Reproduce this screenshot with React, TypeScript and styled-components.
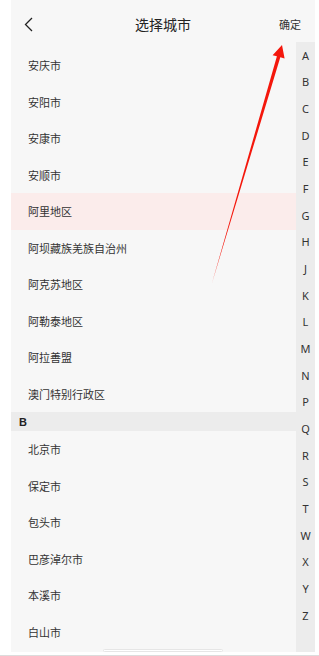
import React from "react";
import styled, { createGlobalStyle } from "styled-components";

const Global = createGlobalStyle`
  html, body { margin: 0; padding: 0; background: #ffffff; }
  body { font-family: "Noto Sans", "Noto Sans CJK SC", sans-serif; }
  * { box-sizing: border-box; }
`;

const Screen = styled.div`
  position: relative;
  width: 319px;
  height: 656px;
  overflow: hidden;
  background: #ffffff;
  display: flex;
  flex-direction: column;
`;

const Frame = styled.div`
  position: relative;
  margin: 0 4px 0 11px;
  height: 652px;
  background: #f7f7f7;
  display: flex;
  flex-direction: column;
  overflow: hidden;
`;

const Header = styled.div`
  position: relative;
  height: 42px;
  flex: none;
  display: flex;
  align-items: center;
  justify-content: space-between;
  padding: 6px 14px 0 13px;
`;

const BackBtn = styled.div`
  width: 12px;
  height: 16px;
  display: flex;
  align-items: center;
`;

const Title = styled.div`
  position: absolute;
  left: 0;
  right: 0;
  top: 6px;
  bottom: 0;
  display: flex;
  align-items: center;
  justify-content: center;
  font-family: "Noto Sans CJK SC", sans-serif;
  font-size: 14px;
  color: #222;
  pointer-events: none;
`;

const Confirm = styled.div`
  font-family: "Noto Sans CJK SC", sans-serif;
  font-size: 11px;
  color: #333;
`;

const Body = styled.div`
  position: relative;
  flex: 1;
  display: flex;
  flex-direction: column;
  padding-top: 5px;
`;

const Row = styled.div<{ $active?: boolean }>`
  height: 36.5px;
  flex: none;
  display: flex;
  align-items: center;
  padding-left: 17px;
  padding-right: 19px;
  font-family: "Noto Sans CJK SC", sans-serif;
  font-size: 11px;
  color: #333;
  background: ${(p) => (p.$active ? "#fbeceb" : "transparent")};
`;

const SectionHead = styled.div`
  height: 19px;
  flex: none;
  display: flex;
  align-items: center;
  padding-left: 8px;
  font-family: "Liberation Sans", sans-serif;
  font-weight: 700;
  font-size: 11px;
  color: #222;
  background: #ececec;
`;

const IndexBar = styled.div`
  position: absolute;
  top: 0;
  right: 0;
  bottom: 0;
  width: 19px;
  background: #ececec;
  display: flex;
  flex-direction: column;
`;

const IndexLetter = styled.div`
  height: 26.67px;
  flex: none;
  display: flex;
  align-items: center;
  justify-content: center;
  font-family: "Noto Sans", sans-serif;
  font-size: 11px;
  color: #333;
`;

const HomeIndicator = styled.div`
  position: absolute;
  left: 92px;
  bottom: 0px;
  width: 120px;
  height: 3px;
  border-radius: 2px;
  background: #ffffff;
  border: 1px solid #e6e6e6;
`;

const BottomLine = styled.div`
  margin-top: 3px;
  height: 1px;
  background: #dcdcdc;
`;

const Overlay = styled.svg`
  position: absolute;
  left: 0;
  top: 0;
  width: 319px;
  height: 656px;
  pointer-events: none;
`;

const aRows = [
  "安庆市",
  "安阳市",
  "安康市",
  "安顺市",
  "阿里地区",
  "阿坝藏族羌族自治州",
  "阿克苏地区",
  "阿勒泰地区",
  "阿拉善盟",
  "澳门特别行政区",
];
const bRows = ["北京市", "保定市", "包头市", "巴彦淖尔市", "本溪市", "白山市"];
const letters = "ABCDEFGHJKLMNPQRSTWXYZ".split("");

export default function App() {
  return (
    <>
      <Global />
      <Screen>
        <Frame>
          <Header>
            <BackBtn>
              <svg width="9" height="15" viewBox="0 0 9 15">
                <path d="M8 1 L1.5 7.5 L8 14" fill="none" stroke="#222" strokeWidth="1.3" />
              </svg>
            </BackBtn>
            <Title>选择城市</Title>
            <Confirm>确定</Confirm>
          </Header>
          <Body>
            {aRows.map((r) => (
              <Row key={r} $active={r === "阿里地区"}>
                {r}
              </Row>
            ))}
            <SectionHead>B</SectionHead>
            {bRows.map((r) => (
              <Row key={r}>{r}</Row>
            ))}
            <IndexBar>
              {letters.map((l) => (
                <IndexLetter key={l}>{l}</IndexLetter>
              ))}
            </IndexBar>
            <HomeIndicator />
          </Body>
        </Frame>
        <BottomLine />
        <Overlay viewBox="0 0 319 656">
          <path
            d="M212 283 L276.9 56.3 L272.6 55.2 L282 45 L284.6 58.6 L280.3 57.3 Z"
            fill="#f4170c"
          />
        </Overlay>
      </Screen>
    </>
  );
}
